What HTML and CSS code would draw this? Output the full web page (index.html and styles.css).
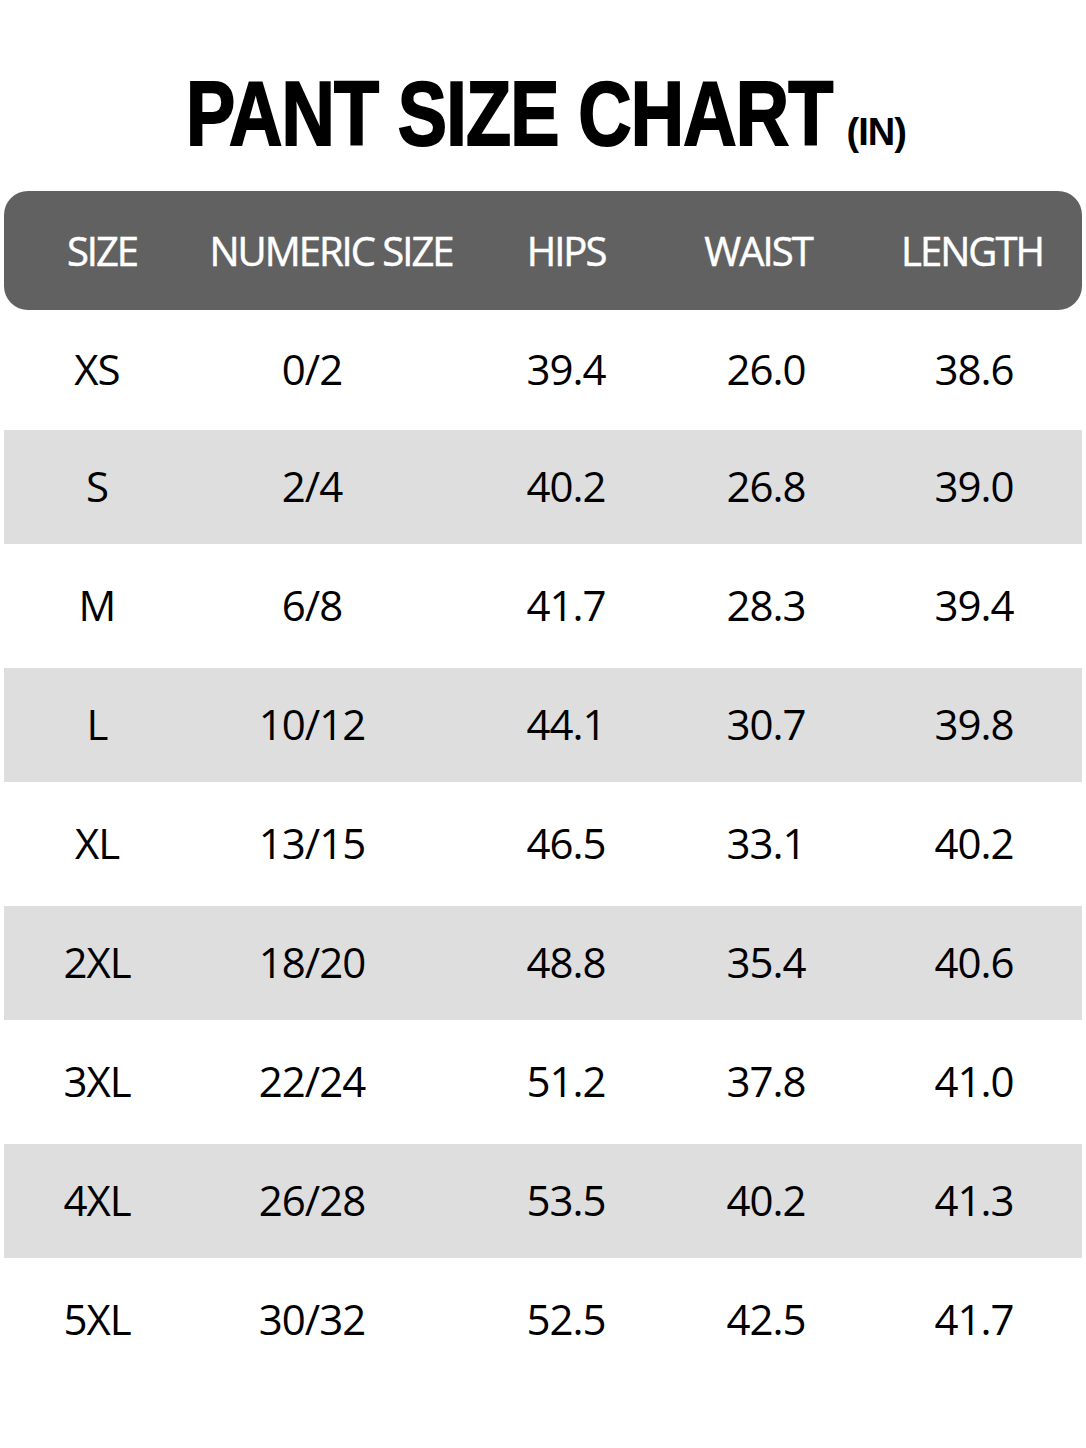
FILE: index.html
```html
<!DOCTYPE html>
<html lang="en">
<head>
<meta charset="utf-8">
<title>Pant Size Chart</title>
<link rel="stylesheet" href="styles.css">
</head>
<body>
<div class="chart">
  <h1 class="title"><span class="main">PANT SIZE CHART</span><span class="unit">(IN)</span></h1>
  <div class="table">
    <div class="head">
      <div class="hc">SIZE</div>
      <div class="hc">NUMERIC SIZE</div>
      <div class="hc">HIPS</div>
      <div class="hc">WAIST</div>
      <div class="hc last">LENGTH</div>
    </div>
    <div class="row first"><div class="c">XS</div><div class="c">0/2</div><div class="c">39.4</div><div class="c">26.0</div><div class="c last">38.6</div></div>
    <div class="row shade"><div class="c">S</div><div class="c">2/4</div><div class="c">40.2</div><div class="c">26.8</div><div class="c last">39.0</div></div>
    <div class="row"><div class="c">M</div><div class="c">6/8</div><div class="c">41.7</div><div class="c">28.3</div><div class="c last">39.4</div></div>
    <div class="row shade"><div class="c">L</div><div class="c">10/12</div><div class="c">44.1</div><div class="c">30.7</div><div class="c last">39.8</div></div>
    <div class="row"><div class="c">XL</div><div class="c">13/15</div><div class="c">46.5</div><div class="c">33.1</div><div class="c last">40.2</div></div>
    <div class="row shade"><div class="c">2XL</div><div class="c">18/20</div><div class="c">48.8</div><div class="c">35.4</div><div class="c last">40.6</div></div>
    <div class="row"><div class="c">3XL</div><div class="c">22/24</div><div class="c">51.2</div><div class="c">37.8</div><div class="c last">41.0</div></div>
    <div class="row shade"><div class="c">4XL</div><div class="c">26/28</div><div class="c">53.5</div><div class="c">40.2</div><div class="c last">41.3</div></div>
    <div class="row"><div class="c">5XL</div><div class="c">30/32</div><div class="c">52.5</div><div class="c">42.5</div><div class="c last">41.7</div></div>
  </div>
</div>
</body>
</html>
```

FILE: styles.css
```css
html, body {
  margin: 0;
  padding: 0;
  background: #ffffff;
}

.chart {
  width: 1086px;
  min-height: 1448px;
  background: #ffffff;
}

.title {
  margin: 0;
  padding-top: 69px;
  padding-left: 6px;
  height: 90px;
  line-height: 90px;
  text-align: center;
  color: #000;
  white-space: nowrap;
  font-weight: normal;
}

.title .main {
  display: inline-block;
  font-family: "Liberation Sans", Arial, sans-serif;
  font-weight: 700;
  font-size: 90px;
  letter-spacing: -1px;
  -webkit-text-stroke: 2px #000;
  transform: scaleX(0.82);
  transform-origin: left center;
  margin-right: -142px;
}

.title .unit {
  font-family: "Liberation Sans", Arial, sans-serif;
  font-weight: 700;
  font-size: 38px;
  margin-left: 14px;
  letter-spacing: -1px;
}

.table {
  margin-top: 32px;
  font-family: "Open Sans", "Noto Sans", sans-serif;
}

.head {
  margin: 0 4px;
  height: 119px;
  border-radius: 24px;
  background: #616161;
  display: grid;
  grid-template-columns: 196px 262px 208px 176px 1fr;
  align-items: center;
}

.hc {
  text-align: center;
  color: #ffffff;
  font-weight: 400;
  font-size: 40px;
  letter-spacing: -2px;
  -webkit-text-stroke: 0.5px #ffffff;
  white-space: nowrap;
}

.hc.last {
  padding-left: 16px;
}

.row {
  margin: 0 4px;
  height: 124px;
  display: grid;
  grid-template-columns: 186px 244px 264px 136px 1fr;
  align-items: center;
  padding-bottom: 4px;
  box-sizing: border-box;
}

.row.first {
  height: 120px;
}

.row.shade {
  height: 114px;
  background: #dedede;
}

.c {
  text-align: center;
  color: #000;
  font-size: 42px;
  letter-spacing: -1px;
  white-space: nowrap;
}

.c.last {
  padding-left: 32px;
}
```
